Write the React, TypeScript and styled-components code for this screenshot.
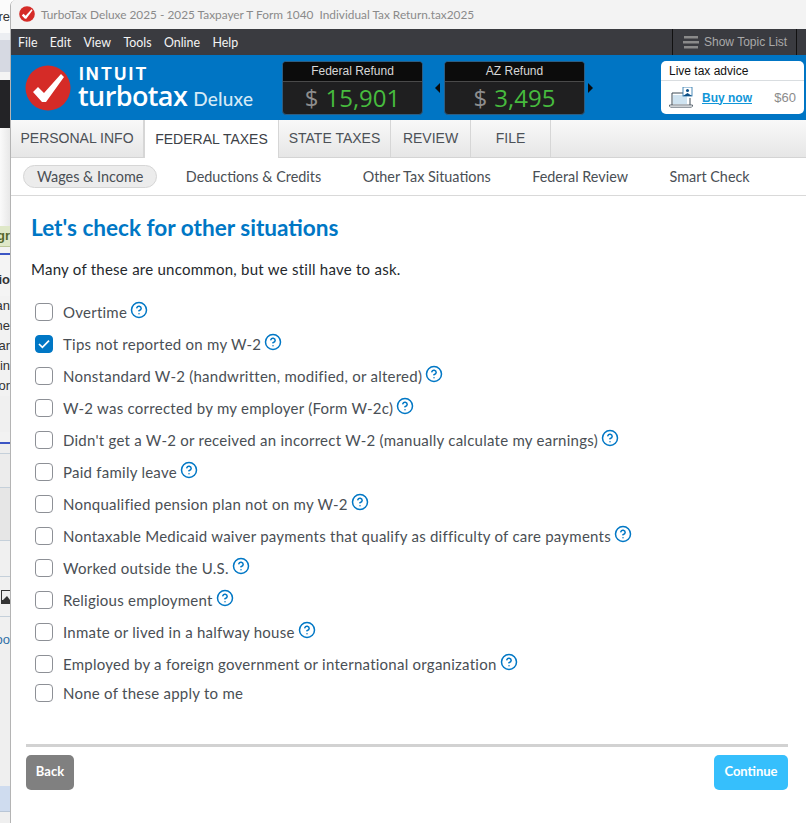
import React from "react";
import styled, { createGlobalStyle } from "styled-components";
import { CircleHelp } from "lucide-react";

const GlobalStyle = createGlobalStyle`
  html, body {
    margin: 0;
    padding: 0;
    height: 100%;
    background: #fff;
  }
  * {
    box-sizing: border-box;
  }
`;

const Page = styled.div`
  display: flex;
  width: 806px;
  height: 823px;
  overflow: hidden;
  font-family: "Lato", sans-serif;
`;

const Behind = styled.div`
  width: 10px;
  flex: none;
  display: flex;
  flex-direction: column;
  overflow: hidden;
`;

const Strip = styled.div<{ $h: number; $bg?: string; $line?: string; $color?: string; $bold?: boolean }>`
  height: ${(p) => p.$h}px;
  flex: none;
  background: ${(p) => p.$bg || "#efefef"};
  border-bottom: ${(p) => (p.$line ? `1px solid ${p.$line}` : "none")};
  color: ${(p) => p.$color || "#333"};
  font: ${(p) => (p.$bold ? "bold" : "normal")} 13px/20px "Liberation Sans", sans-serif;
  white-space: nowrap;
  display: flex;
  align-items: center;
  justify-content: flex-end;
  overflow: hidden;
`;

const Window = styled.div`
  width: 796px;
  flex: none;
  display: flex;
  flex-direction: column;
  background: #fff;
  border-left: 1px solid #b4b4b4;
  border-top-left-radius: 6px;
  overflow: hidden;
`;

const TitleBar = styled.div`
  height: 29px;
  flex: none;
  display: flex;
  align-items: center;
  gap: 6px;
  padding: 0 0 1px 8px;
  background: #f3f3f3;
  color: #8a8a8a;
  font: 11.85px "Lato", sans-serif;
  white-space: pre;
`;

const MenuBar = styled.div`
  height: 26px;
  flex: none;
  display: flex;
  align-items: center;
  background: #3a3b40;
  padding-left: 7px;
`;

const MenuItem = styled.span`
  color: #f4f4f4;
  font: 12.4px "Lato", sans-serif;
  margin-right: 12.4px;
`;

const TopicButton = styled.div`
  margin-left: auto;
  margin-right: 9px;
  width: 125px;
  height: 26px;
  display: flex;
  align-items: center;
  gap: 5px;
  padding-left: 10px;
  border-left: 1px solid #111;
  border-right: 1px solid #111;
  color: #a9a9a9;
  font: 12px "Liberation Sans", sans-serif;
`;

const Header = styled.div`
  height: 65px;
  flex: none;
  display: flex;
  align-items: center;
  background: #0075c4;
  padding: 0 2px 0 14px;
`;

const Logo = styled.div`
  display: flex;
  align-items: center;
  gap: 7px;
  width: 257px;
  flex: none;
`;

const Wordmark = styled.div`
  display: flex;
  flex-direction: column;
  color: #fff;
  padding-top: 1px;
`;

const Intuit = styled.div`
  font: bold 17px/16px "Inter", sans-serif;
  letter-spacing: 2px;
  padding-left: 1px;
`;

const Product = styled.div`
  font: 600 27px/27px "Open Sans", sans-serif;
  letter-spacing: -0.6px;
  white-space: nowrap;
`;

const Edition = styled.span`
  font: 500 19px "Lato", sans-serif;
  letter-spacing: 0.2px;
  margin-left: 6px;
  color: #d5e9f6;
`;

const Refund = styled.div`
  width: 141px;
  height: 54px;
  flex: none;
  display: flex;
  flex-direction: column;
  background: #1f1f20;
  border: 1px solid #2d5d82;
  border-radius: 4px;
  overflow: hidden;
`;

const RefundTitle = styled.div`
  height: 20px;
  flex: none;
  display: flex;
  align-items: center;
  justify-content: center;
  background: #0c0c0c;
  border-bottom: 1px solid #4a4a4a;
  color: #d8d8d8;
  font: 12px "Liberation Sans", sans-serif;
`;

const RefundValue = styled.div`
  flex: 1;
  display: flex;
  align-items: center;
  justify-content: center;
  gap: 7px;
  color: #47bb3e;
  font: 24px "Open Sans", sans-serif;
  line-height: 1;
`;

const Dollar = styled.span`
  color: #8d8d8d;
`;

const Arrow = styled.div<{ $dir: "left" | "right" }>`
  width: 0;
  height: 0;
  flex: none;
  margin: ${(p) => (p.$dir === "left" ? "0" : "0 0 0 3px")};
  border-top: 5px solid transparent;
  border-bottom: 5px solid transparent;
  border-${(p) => (p.$dir === "left" ? "right" : "left")}: 5px solid #0a0a0a;
`;

const ArrowGap = styled.div`
  width: 21px;
  flex: none;
  display: flex;
  align-items: center;
  justify-content: flex-end;
  padding-right: 4px;
`;

const Advice = styled.div`
  margin-left: auto;
  width: 143px;
  height: 53px;
  flex: none;
  display: flex;
  flex-direction: column;
  background: #fff;
  border-radius: 5px;
  overflow: hidden;
`;

const AdviceTitle = styled.div`
  height: 20px;
  flex: none;
  display: flex;
  align-items: center;
  padding-left: 8px;
  border-bottom: 1px solid #d9dde0;
  color: #111;
  font: 12px "Liberation Sans", sans-serif;
`;

const AdviceBody = styled.div`
  flex: 1;
  display: flex;
  align-items: center;
  padding: 0 8px;
  font: 12px "Liberation Sans", sans-serif;
`;

const BuyLink = styled.span`
  margin-left: 9px;
  color: #1196d8;
  font-weight: bold;
  text-decoration: underline;
`;

const Price = styled.span`
  margin-left: auto;
  color: #8b8b8b;
  font-size: 13px;
`;

const TabBar = styled.div`
  height: 38px;
  flex: none;
  display: flex;
  background: linear-gradient(#f9f9f9, #e6e6e6);
  border-bottom: 1px solid #d4d4d4;
`;

const Tab = styled.div<{ $w: number; $active?: boolean }>`
  width: ${(p) => p.$w}px;
  flex: none;
  display: flex;
  align-items: center;
  justify-content: center;
  padding-bottom: ${(p) => (p.$active ? "0" : "2px")};
  margin-bottom: ${(p) => (p.$active ? "-1px" : "0")};
  background: ${(p) => (p.$active ? "#fff" : "transparent")};
  border-right: 1px solid #d6d6d6;
  border-left: ${(p) => (p.$active ? "1px solid #d6d6d6" : "none")};
  color: ${(p) => (p.$active ? "#3c4147" : "#4c5157")};
  font: 14px "Liberation Sans", sans-serif;
  white-space: nowrap;
`;

const SubNav = styled.div`
  height: 38px;
  flex: none;
  display: flex;
  align-items: center;
  gap: 28.5px;
  padding-left: 12px;
  border-bottom: 1px solid #d9d9d9;
`;

const SubItem = styled.div<{ $active?: boolean }>`
  flex: none;
  height: 23px;
  display: flex;
  align-items: center;
  padding: ${(p) => (p.$active ? "0 13px" : "0 13px 0 0")};
  background: ${(p) => (p.$active ? "#ececec" : "transparent")};
  border: ${(p) => (p.$active ? "1px solid #d6d6d6" : "none")};
  border-radius: 12px;
  color: #4a4f55;
  font-size: 14.4px;
  white-space: nowrap;
`;

const Content = styled.div`
  flex: 1;
  display: flex;
  flex-direction: column;
  padding: 16px 18px 0 15px;
`;

const Heading = styled.h1`
  margin: 0 0 0 5px;
  color: #0077c5;
  font: bold 22.6px/32px "Lato", sans-serif;
`;

const Intro = styled.p`
  margin: 15px 0 17px 5px;
  color: #24282c;
  font-size: 15px;
  line-height: 20px;
  letter-spacing: 0.25px;
`;

const Options = styled.div`
  display: flex;
  flex-direction: column;
  padding-left: 9px;
`;

const Option = styled.label<{ $h?: number }>`
  height: ${(p) => p.$h || 32}px;
  display: flex;
  align-items: center;
  color: #4a4f55;
  font-size: 15px;
  letter-spacing: 0.25px;
  white-space: nowrap;
`;

const Box = styled.span<{ $checked?: boolean }>`
  width: 18px;
  height: 18px;
  flex: none;
  margin-right: 10px;
  display: flex;
  align-items: center;
  justify-content: center;
  background: ${(p) => (p.$checked ? "#0077c5" : "#fff")};
  border: 1px solid ${(p) => (p.$checked ? "#0077c5" : "#8d9096")};
  border-radius: 4px;
`;

const HelpIcon = styled(CircleHelp)`
  margin: -5px 0 0 3px;
  flex: none;
  color: #0077c5;
`;

const Divider = styled.div`
  height: 3px;
  flex: none;
  margin-top: 38px;
  background: #d2d2d2;
`;

const Footer = styled.div`
  display: flex;
  justify-content: space-between;
  margin-top: 8px;
`;

const Button = styled.div<{ $primary?: boolean }>`
  height: 35px;
  width: ${(p) => (p.$primary ? 74 : 48)}px;
  display: flex;
  align-items: center;
  justify-content: center;
  padding-bottom: 3px;
  background: ${(p) => (p.$primary ? "#36bffc" : "#808080")};
  border-radius: 5px;
  color: #fff;
  font: bold 13px "Lato", sans-serif;
`;

function CheckBadge({ size }: { size: number }) {
  return (
    <svg width={size} height={size} viewBox="0 0 46 46" style={{ flex: "none" }}>
      <circle cx="23" cy="23" r="22.5" fill="#d52b27" />
      <path d="M8 27 L13 22 L19 28 L36 9 L39 12 L21 37 L17 37 Z" fill="#fff" />
    </svg>
  );
}

function ListIcon() {
  return (
    <svg width="16" height="15" viewBox="0 0 16 15">
      <path d="M1 1h14v2.6H1zM0 6h16v2.6H0zM1 11h14v2.6H1z" fill="#8a8a8a" />
    </svg>
  );
}

function LaptopIcon() {
  return (
    <svg width="24" height="21" viewBox="0 0 24 21" style={{ flex: "none" }}>
      <path d="M3 18V6h12" fill="none" stroke="#3c4a55" strokeWidth="1" />
      <rect x="4" y="8" width="14" height="9" fill="#cfe3f0" />
      <path d="M0.5 18h23v1.2l-1 1H1.5l-1-1z" fill="#fff" stroke="#3c4a55" strokeWidth="0.8" />
      <path d="M21 11v7" stroke="#3c4a55" strokeWidth="1" />
      <rect x="14" y="0" width="9" height="9" fill="#fff" stroke="#1f6fa8" strokeWidth="0.8" />
      <path d="M14 9l4.5-3 4.5 3z" fill="#0b4f86" />
      <circle cx="18.5" cy="3.5" r="1.5" fill="#0b4f86" />
    </svg>
  );
}

const SMALL_CHECK = (
  <svg width="12" height="10" viewBox="0 0 12 10">
    <path d="M1 5l3.4 3.4L11 1.6" fill="none" stroke="#fff" strokeWidth="1.7" />
  </svg>
);

const OPTIONS = [
  { label: "Overtime" },
  { label: "Tips not reported on my W-2", checked: true },
  { label: "Nonstandard W-2 (handwritten, modified, or altered)" },
  { label: "W-2 was corrected by my employer (Form W-2c)" },
  { label: "Didn't get a W-2 or received an incorrect W-2 (manually calculate my earnings)" },
  { label: "Paid family leave" },
  { label: "Nonqualified pension plan not on my W-2" },
  { label: "Nontaxable Medicaid waiver payments that qualify as difficulty of care payments" },
  { label: "Worked outside the U.S." },
  { label: "Religious employment" },
  { label: "Inmate or lived in a halfway house" },
  { label: "Employed by a foreign government or international organization" },
];

const TABS = [
  { label: "PERSONAL INFO", width: 133 },
  { label: "FEDERAL TAXES", width: 135, active: true },
  { label: "STATE TAXES", width: 112 },
  { label: "REVIEW", width: 80 },
  { label: "FILE", width: 80 },
];

const SUB_ITEMS = [
  { label: "Wages & Income", active: true },
  { label: "Deductions & Credits" },
  { label: "Other Tax Situations" },
  { label: "Federal Review" },
  { label: "Smart Check" },
];

export default function App() {
  return (
    <Page>
      <GlobalStyle />
      <Behind>
        <Strip $h={33} $bg="#fbfbfb">re</Strip>
        <Strip $h={7} $bg="#eceef2" />
        <Strip $h={32} $bg="#d6d9e2" />
        <Strip $h={8} $bg="#f4f4f4" />
        <Strip $h={48} $bg="#232326" />
        <Strip $h={98} $bg="linear-gradient(90deg,#fafafa,#e8e8e8)" />
        <Strip $h={21} $bg="#dfe8c8" $line="#bcc89a" $color="#55662a" $bold>gr</Strip>
        <Strip $h={6} $bg="#f2f2f2" />
        <Strip $h={2} $bg="#3b55c4" />
        <Strip $h={15} $bg="#f4f4f4" />
        <Strip $h={20} $bg="#f4f4f4" $bold>io</Strip>
        <Strip $h={6} $bg="#f4f4f4" />
        <Strip $h={20} $bg="#f2f2f2">an</Strip>
        <Strip $h={20} $bg="#f2f2f2">he</Strip>
        <Strip $h={20} $bg="#f2f2f2">ar</Strip>
        <Strip $h={20} $bg="#f2f2f2">in</Strip>
        <Strip $h={20} $bg="#f2f2f2">or</Strip>
        <Strip $h={36} $bg="#f0f0f0" />
        <Strip $h={10} $bg="#f2f2f2" />
        <Strip $h={2} $bg="#3b55c4" />
        <Strip $h={10} $bg="#eeeeee" $line="#c5d0da" />
        <Strip $h={34} $bg="#ececec" $line="#c5d0da" />
        <Strip $h={53} $bg="#e6e6e6" $line="#c5d0da" />
        <Strip $h={36} $bg="#f0f0f0" $line="#c5d0da" />
        <Strip $h={40} $bg="#f0f0f0" $line="#c5d0da">
          <svg width="9" height="14" viewBox="0 0 9 14">
            <path d="M0 0h9v14H0z" fill="#333" />
            <path d="M1 1h8v9L6 6 2 10H1z" fill="#eee" />
          </svg>
        </Strip>
        <Strip $h={13} $bg="#f0f0f0" />
        <Strip $h={20} $bg="#f0f0f0" $color="#2e6ea6">oo</Strip>
        <Strip $h={136} $bg="#efefef" />
        <Strip $h={26} $bg="#cfdcef" $line="#b9c6d6" />
        <Strip $h={23} $bg="#efefef" />
      </Behind>
      <Window>
        <TitleBar>
          <CheckBadge size={16} />
          {"TurboTax Deluxe 2025 - 2025 Taxpayer T Form 1040  Individual Tax Return.tax2025"}
        </TitleBar>
        <MenuBar>
          {["File", "Edit", "View", "Tools", "Online", "Help"].map((m) => (
            <MenuItem key={m}>{m}</MenuItem>
          ))}
          <TopicButton>
            <ListIcon />
            Show Topic List
          </TopicButton>
        </MenuBar>
        <Header>
          <Logo>
            <CheckBadge size={46} />
            <Wordmark>
              <Intuit>INTUIT</Intuit>
              <Product>
                turbotax<Edition>Deluxe</Edition>
              </Product>
            </Wordmark>
          </Logo>
          <Refund>
            <RefundTitle>Federal Refund</RefundTitle>
            <RefundValue>
              <Dollar>$</Dollar>15,901
            </RefundValue>
          </Refund>
          <ArrowGap>
            <Arrow $dir="left" />
          </ArrowGap>
          <Refund>
            <RefundTitle>AZ Refund</RefundTitle>
            <RefundValue>
              <Dollar>$</Dollar>3,495
            </RefundValue>
          </Refund>
          <Arrow $dir="right" />
          <Advice>
            <AdviceTitle>Live tax advice</AdviceTitle>
            <AdviceBody>
              <LaptopIcon />
              <BuyLink>Buy now</BuyLink>
              <Price>$60</Price>
            </AdviceBody>
          </Advice>
        </Header>
        <TabBar>
          {TABS.map((t) => (
            <Tab key={t.label} $w={t.width} $active={t.active}>
              {t.label}
            </Tab>
          ))}
        </TabBar>
        <SubNav>
          {SUB_ITEMS.map((s) => (
            <SubItem key={s.label} $active={s.active}>
              {s.label}
            </SubItem>
          ))}
        </SubNav>
        <Content>
          <Heading>Let's check for other situations</Heading>
          <Intro>Many of these are uncommon, but we still have to ask.</Intro>
          <Options>
            {OPTIONS.map((o) => (
              <Option key={o.label}>
                <Box $checked={o.checked}>{o.checked ? SMALL_CHECK : null}</Box>
                {o.label}
                <HelpIcon size={18} strokeWidth={2} />
              </Option>
            ))}
            <Option $h={26}>
              <Box />
              None of these apply to me
            </Option>
          </Options>
          <Divider />
          <Footer>
            <Button>Back</Button>
            <Button $primary>Continue</Button>
          </Footer>
        </Content>
      </Window>
    </Page>
  );
}
